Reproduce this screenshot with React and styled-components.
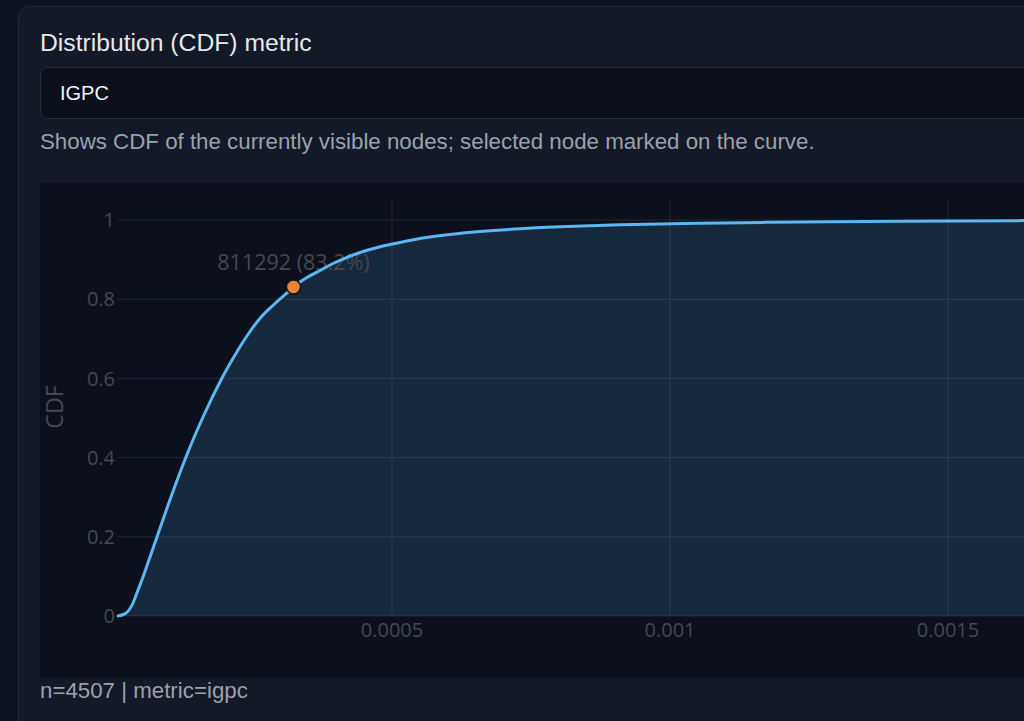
import React from "react";
import styled, { createGlobalStyle } from "styled-components";

const GlobalStyle = createGlobalStyle`
  html, body {
    margin: 0;
    padding: 0;
    background: #0e1321;
    overflow: hidden;
  }
  body {
    font-family: "Liberation Sans", Arial, sans-serif;
  }
`;

const Page = styled.div`
  padding: 6px 0 0 18px;
  height: 715px;
  overflow: hidden;
`;

const Panel = styled.section`
  box-sizing: border-box;
  width: 1100px;
  min-height: 760px;
  background: #131926;
  border: 1px solid #222a39;
  border-radius: 12px;
  padding: 22px 21px 0 21px;
  display: flex;
  flex-direction: column;
`;

const Label = styled.label`
  font-size: 24.7px;
  line-height: 28px;
  color: #e6e8ec;
`;

const Select = styled.div`
  box-sizing: border-box;
  margin-top: 10px;
  height: 52px;
  display: flex;
  align-items: center;
  padding: 0 19px;
  background: #0b101b;
  border: 1px solid #262e3e;
  border-radius: 7px;
  font-size: 20px;
  color: #f1f3f6;
`;

const Help = styled.p`
  margin: 10px 0 0;
  font-size: 22.3px;
  line-height: 25px;
  color: #9ba1ac;
`;

const ChartBox = styled.div`
  margin-top: 29px;
  height: 495px;
  background: #0b101c;
`;

const Footer = styled.div`
  font-size: 22.3px;
  line-height: 26px;
  color: #9ba1ac;
`;

const TickText = styled.text`
  font-family: "Open Sans", "DejaVu Sans", sans-serif;
  font-size: ${(p) => p.$size || 20}px;
  fill: #46484d;
`;

const W = 1056;
const PLOT_L = 78;
const PLOT_T = 16;
const Y0 = 433;
const Y1 = 37;
const yOf = (v) => Y0 - (Y0 - Y1) * v;
const xOf = (v) => 74 + v * 556000;

const raw = [
  [118, 616], [122, 615], [126, 613], [129, 610], [133, 603], [138, 590],
  [143, 577], [150, 557], [157, 537], [171, 497], [186, 457], [203, 417],
  [222, 378], [238, 350], [250, 331.5], [262, 316], [275, 303.5],
  [287, 293], [293.5, 287.5], [300, 282], [307, 277.5], [320, 270.5],
  [333, 263.5], [343, 259], [353, 255], [368, 250], [383, 246], [400, 242.5],
  [420, 238.5], [450, 234.5], [480, 231.5], [520, 228.8], [560, 226.8],
  [620, 224.8], [700, 223.2], [800, 222], [900, 221.2], [1024, 220.6],
  [1100, 220.3],
];
const pts = raw.map(([x, y]) => [x - 40, y - 183]);

function smoothPath(p) {
  let d = `M${p[0][0]},${p[0][1]}`;
  for (let i = 0; i < p.length - 1; i++) {
    const p0 = p[i - 1] || p[i];
    const p1 = p[i];
    const p2 = p[i + 1];
    const p3 = p[i + 2] || p2;
    const c1x = p1[0] + (p2[0] - p0[0]) / 6;
    const c1y = p1[1] + (p2[1] - p0[1]) / 6;
    const c2x = p2[0] - (p3[0] - p1[0]) / 6;
    const c2y = p2[1] - (p3[1] - p1[1]) / 6;
    d += ` C${c1x.toFixed(2)},${c1y.toFixed(2)} ${c2x.toFixed(2)},${c2y.toFixed(2)} ${p2[0]},${p2[1]}`;
  }
  return d;
}

const curve = smoothPath(pts);
const last = pts[pts.length - 1];
const fillPath = `${curve} L${last[0]},${Y0} L${pts[0][0]},${Y0} Z`;

const yTicks = [0, 0.2, 0.4, 0.6, 0.8, 1];
const xTicks = [
  { v: 0.0005, label: "0.0005" },
  { v: 0.001, label: "0.001" },
  { v: 0.0015, label: "0.0015" },
];

function CdfChart() {
  return (
    <svg width={W} height={495} style={{ display: "block" }}>
      {yTicks.map((t) => (
        <line
          key={`gy${t}`}
          x1={PLOT_L}
          x2={W}
          y1={yOf(t)}
          y2={yOf(t)}
          stroke="#1f2939"
          strokeWidth="1"
        />
      ))}
      {xTicks.map((t) => (
        <line
          key={`gx${t.v}`}
          x1={xOf(t.v)}
          x2={xOf(t.v)}
          y1={PLOT_T}
          y2={Y0}
          stroke="#1f2939"
          strokeWidth="1"
        />
      ))}
      <path d={fillPath} fill="rgba(90,180,240,0.15)" />
      {yTicks.map((t) => (
        <TickText
          key={`ty${t}`}
          x={75}
          y={yOf(t)}
          dy="0.36em"
          textAnchor="end"
        >
          {t}
        </TickText>
      ))}
      {xTicks.map((t) => (
        <TickText key={`tx${t.v}`} x={xOf(t.v)} y={454} textAnchor="middle">
          {t.label}
        </TickText>
      ))}
      <TickText
        $size={23.3}
        x={0}
        y={0}
        textAnchor="middle"
        dy="0.36em"
        transform="translate(15 224) rotate(-90)"
      >
        CDF
      </TickText>
      <TickText $size={21.5} x={253.5} y={87} textAnchor="middle">
        811292 (83.2%)
      </TickText>
      <path
        d={curve}
        fill="none"
        stroke="#5bb6f1"
        strokeWidth="3"
        strokeLinejoin="round"
        strokeLinecap="round"
      />
      <circle cx={253.5} cy={104} r={7} fill="#ea833a" stroke="#161616" strokeWidth="1.5" />
    </svg>
  );
}

export default function App() {
  return (
    <>
      <GlobalStyle />
      <Page>
        <Panel>
          <Label>Distribution (CDF) metric</Label>
          <Select>IGPC</Select>
          <Help>
            Shows CDF of the currently visible nodes; selected node marked on the curve.
          </Help>
          <ChartBox>
            <CdfChart />
          </ChartBox>
          <Footer>n=4507 | metric=igpc</Footer>
        </Panel>
      </Page>
    </>
  );
}
